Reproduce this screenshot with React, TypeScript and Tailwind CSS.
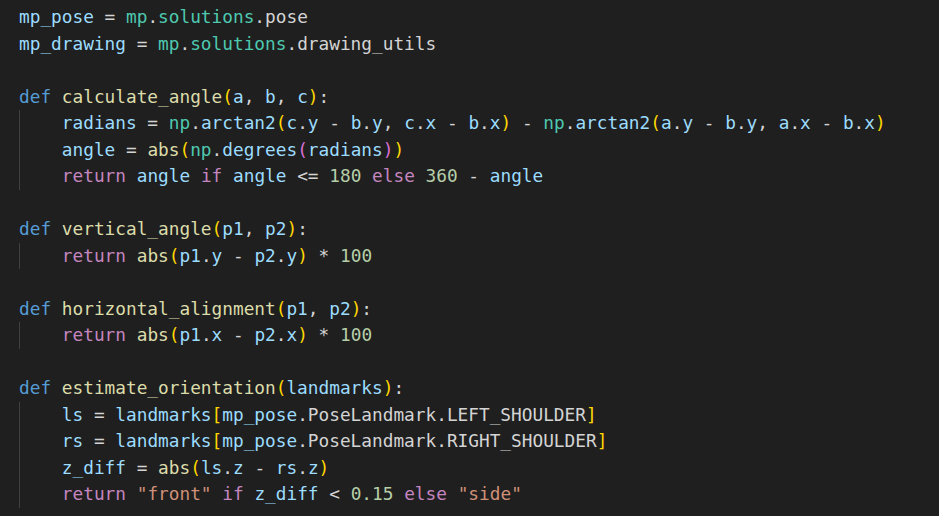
import React from 'react';

type Tok = [string, string];

// VS Code Dark+ token colours
const V = 'text-[#9cdcfe]';
const M = 'text-[#4ec9b0]';
const K = 'text-[#569cd6]';
const F = 'text-[#dcdcaa]';
const C = 'text-[#c586c0]';
const N = 'text-[#b5cea8]';
const S = 'text-[#ce9178]';
const P = 'text-[#d4d4d4]';
const Y = 'text-[#ffd700]';
const O = 'text-[#da70d6]';

const I: Tok = [P, '    '];

const header: Tok[][] = [
  [[V, 'mp_pose'], [P, ' = '], [M, 'mp'], [P, '.'], [M, 'solutions'], [P, '.pose']],
  [[V, 'mp_drawing'], [P, ' = '], [M, 'mp'], [P, '.'], [M, 'solutions'], [P, '.drawing_utils']],
];

const blocks: { def: Tok[]; body: Tok[][] }[] = [
  {
    def: [[K, 'def'], [P, ' '], [F, 'calculate_angle'], [Y, '('], [V, 'a'], [P, ', '], [V, 'b'], [P, ', '], [V, 'c'], [Y, ')'], [P, ':']],
    body: [
      [I, [V, 'radians'], [P, ' = '], [M, 'np'], [P, '.'], [V, 'arctan2'], [Y, '('], [V, 'c'], [P, '.'], [V, 'y'], [P, ' - '], [V, 'b'], [P, '.'], [V, 'y'], [P, ', '], [V, 'c'], [P, '.'], [V, 'x'], [P, ' - '], [V, 'b'], [P, '.'], [V, 'x'], [Y, ')'], [P, ' - '], [M, 'np'], [P, '.'], [V, 'arctan2'], [Y, '('], [V, 'a'], [P, '.'], [V, 'y'], [P, ' - '], [V, 'b'], [P, '.'], [V, 'y'], [P, ', '], [V, 'a'], [P, '.'], [V, 'x'], [P, ' - '], [V, 'b'], [P, '.'], [V, 'x'], [Y, ')']],
      [I, [V, 'angle'], [P, ' = '], [F, 'abs'], [Y, '('], [M, 'np'], [P, '.'], [V, 'degrees'], [O, '('], [V, 'radians'], [O, ')'], [Y, ')']],
      [I, [C, 'return'], [P, ' '], [V, 'angle'], [P, ' '], [C, 'if'], [P, ' '], [V, 'angle'], [P, ' <= '], [N, '180'], [P, ' '], [C, 'else'], [P, ' '], [N, '360'], [P, ' - '], [V, 'angle']],
    ],
  },
  {
    def: [[K, 'def'], [P, ' '], [F, 'vertical_angle'], [Y, '('], [V, 'p1'], [P, ', '], [V, 'p2'], [Y, ')'], [P, ':']],
    body: [
      [I, [C, 'return'], [P, ' '], [F, 'abs'], [Y, '('], [V, 'p1'], [P, '.'], [V, 'y'], [P, ' - '], [V, 'p2'], [P, '.'], [V, 'y'], [Y, ')'], [P, ' * '], [N, '100']],
    ],
  },
  {
    def: [[K, 'def'], [P, ' '], [F, 'horizontal_alignment'], [Y, '('], [V, 'p1'], [P, ', '], [V, 'p2'], [Y, ')'], [P, ':']],
    body: [
      [I, [C, 'return'], [P, ' '], [F, 'abs'], [Y, '('], [V, 'p1'], [P, '.'], [V, 'x'], [P, ' - '], [V, 'p2'], [P, '.'], [V, 'x'], [Y, ')'], [P, ' * '], [N, '100']],
    ],
  },
  {
    def: [[K, 'def'], [P, ' '], [F, 'estimate_orientation'], [Y, '('], [V, 'landmarks'], [Y, ')'], [P, ':']],
    body: [
      [I, [V, 'ls'], [P, ' = '], [V, 'landmarks'], [Y, '['], [V, 'mp_pose'], [P, '.PoseLandmark.LEFT_SHOULDER'], [Y, ']']],
      [I, [V, 'rs'], [P, ' = '], [V, 'landmarks'], [Y, '['], [V, 'mp_pose'], [P, '.PoseLandmark.RIGHT_SHOULDER'], [Y, ']']],
      [I, [V, 'z_diff'], [P, ' = '], [F, 'abs'], [Y, '('], [V, 'ls'], [P, '.'], [V, 'z'], [P, ' - '], [V, 'rs'], [P, '.'], [V, 'z'], [Y, ')']],
      [I, [C, 'return'], [P, ' '], [S, '"front"'], [P, ' '], [C, 'if'], [P, ' '], [V, 'z_diff'], [P, ' < '], [N, '0.15'], [P, ' '], [C, 'else'], [P, ' '], [S, '"side"']],
    ],
  },
];

const Line: React.FC<{ toks: Tok[]; className?: string }> = ({ toks, className = '' }) => (
  <div className={`h-[26.5px] whitespace-pre ${className}`}>
    {toks.map(([cls, t], i) => (
      <span key={i} className={cls}>{t}</span>
    ))}
  </div>
);

const Blank = () => <div className="h-[26.5px]" />;

export default function App() {
  return (
    <div className="w-full h-[516px] overflow-hidden bg-[#1f1f1f] pt-[4px] pl-[19px] font-['DejaVu_Sans_Mono','Liberation_Mono',monospace] text-[17.78px] leading-[26.5px]">
      {header.map((toks, i) => (
        <Line key={i} toks={toks} />
      ))}
      {blocks.map((b, i) => (
        <div key={i}>
          <Blank />
          <Line toks={b.def} />
          <div className="border-l border-[#404040]">
            {b.body.map((toks, j) => (
              <Line key={j} toks={toks} className="-ml-px" />
            ))}
          </div>
        </div>
      ))}
    </div>
  );
}
